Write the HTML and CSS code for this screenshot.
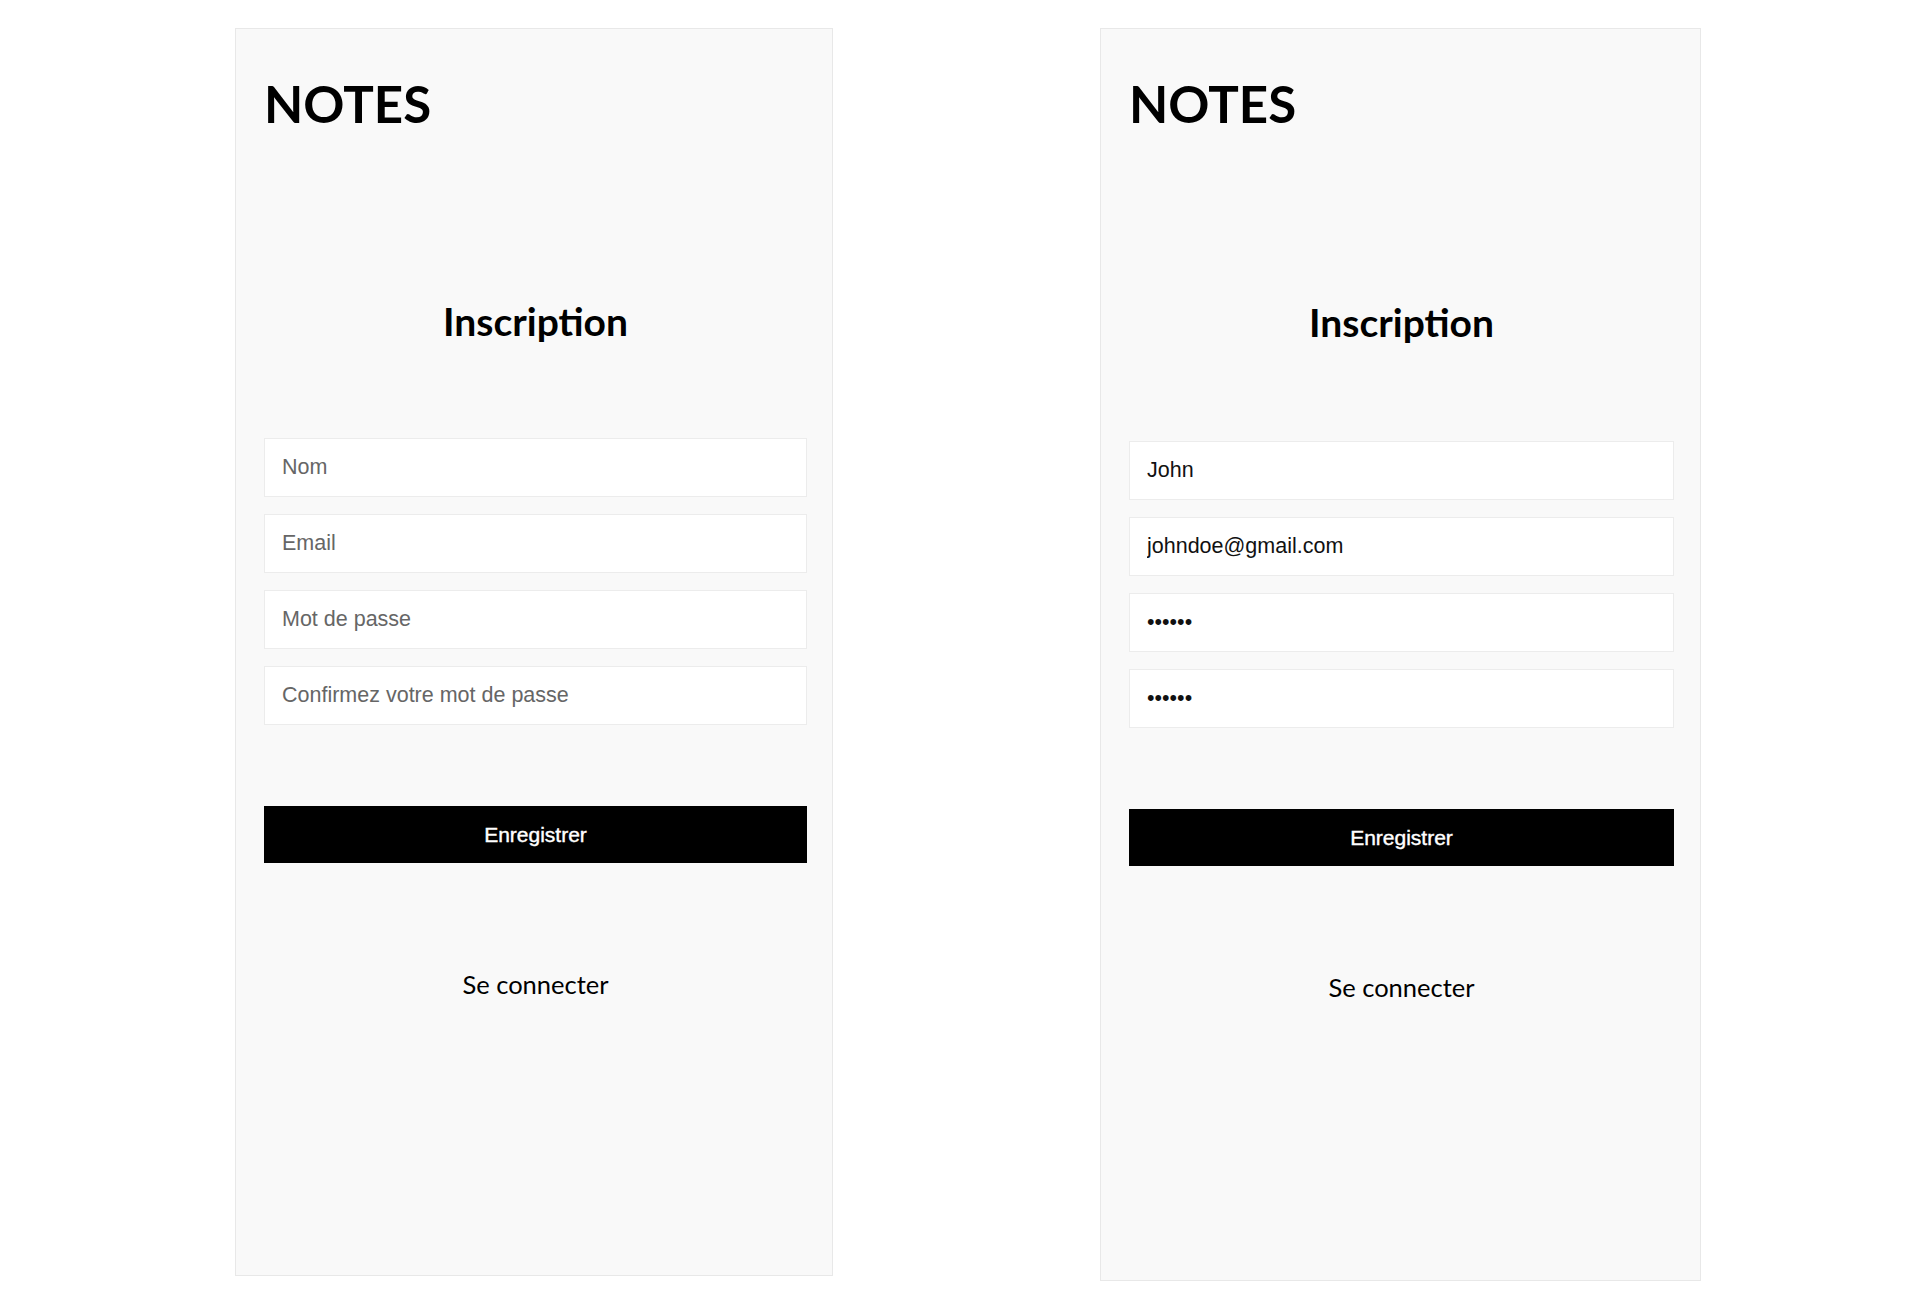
FILE: index.html
```html
<!DOCTYPE html>
<html lang="fr">
<head>
<meta charset="utf-8">
<title>Notes - Inscription</title>
<link rel="stylesheet" href="styles.css">
</head>
<body>
<main class="page">
  <section class="panel">
    <h1 class="brand">NOTES</h1>
    <h2 class="title">Inscription</h2>
    <form class="form">
      <input class="field" type="text" placeholder="Nom">
      <input class="field" type="email" placeholder="Email">
      <input class="field" type="password" placeholder="Mot de passe">
      <input class="field" type="password" placeholder="Confirmez votre mot de passe">
      <button class="submit" type="button">Enregistrer</button>
    </form>
    <a class="link" href="#">Se connecter</a>
  </section>

  <section class="panel panel--filled">
    <h1 class="brand">NOTES</h1>
    <h2 class="title">Inscription</h2>
    <form class="form">
      <input class="field" type="text" placeholder="Nom" value="John">
      <input class="field" type="email" placeholder="Email" value="johndoe@gmail.com">
      <input class="field" type="password" placeholder="Mot de passe" value="secret">
      <input class="field" type="password" placeholder="Confirmez votre mot de passe" value="secret">
      <button class="submit" type="button">Enregistrer</button>
    </form>
    <a class="link" href="#">Se connecter</a>
  </section>
</main>
</body>
</html>
```

FILE: styles.css
```css
html, body {
  margin: 0;
  background: #ffffff;
}

.page {
  display: flex;
  align-items: flex-start;
  gap: 267px;
  padding: 28px 0 0 235px;
}

.panel {
  box-sizing: border-box;
  width: 598px;
  height: 1248px;
  background: #f9f9f9;
  border: 1px solid #e8e8e8;
  padding: 44px 25px 0 28px;
  display: flex;
  flex-direction: column;
}

.panel--filled {
  width: 601px;
  height: 1253px;
  padding: 44px 26px 0 28px;
}

.brand {
  margin: 0;
  font-family: Lato, "Noto Sans", sans-serif;
  font-weight: 700;
  font-size: 51px;
  line-height: normal;
  color: #000;
}

.title {
  margin: 164px 0 0;
  text-align: center;
  font-family: Lato, "Noto Sans", sans-serif;
  font-weight: 700;
  font-size: 39px;
  line-height: normal;
  color: #000;
}

.panel--filled .title {
  margin-top: 165px;
}

.form {
  margin: 94px 0 0;
  display: flex;
  flex-direction: column;
  gap: 17px;
}

.panel--filled .form {
  margin-top: 96px;
}

.field {
  box-sizing: border-box;
  height: 59px;
  width: 100%;
  margin: 0;
  padding: 0 17px;
  background: #fff;
  border: 1px solid #ececec;
  border-radius: 0;
  outline: none;
  font-family: "Liberation Sans", Arial, sans-serif;
  font-size: 21.5px;
  color: #111;
}

.field::placeholder {
  color: #666;
}

.submit {
  margin-top: 64px;
  height: 57px;
  border: 0;
  border-radius: 0;
  background: #000;
  color: #fff;
  font-family: "Liberation Sans", Arial, sans-serif;
  font-size: 21px;
  -webkit-text-stroke: 0.4px #fff;
  cursor: pointer;
}

.link {
  margin-top: 106px;
  text-align: center;
  font-family: Lato, "Noto Sans", sans-serif;
  font-size: 25.5px;
  line-height: normal;
  color: #000;
  text-decoration: none;
}
```
